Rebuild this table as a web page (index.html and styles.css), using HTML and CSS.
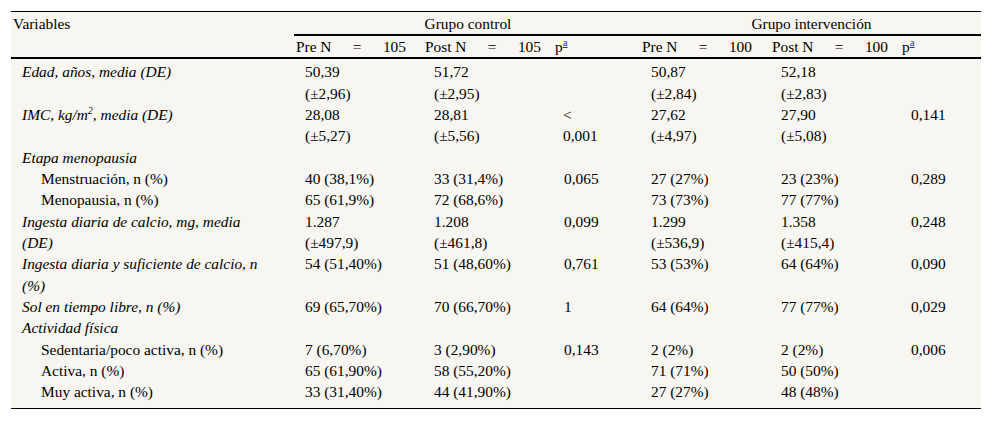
FILE: index.html
```html
<!DOCTYPE html>
<html lang="es">
<head>
<meta charset="utf-8">
<title>Tabla</title>
<link rel="stylesheet" href="styles.css">
</head>
<body>
<div class="page">
<table class="tbl">
  <colgroup>
    <col class="c-var">
    <col class="c-pre">
    <col class="c-post">
    <col class="c-p">
    <col class="c-pre2">
    <col class="c-post2">
    <col class="c-p2">
  </colgroup>
  <thead>
    <tr class="h1">
      <th class="hv" rowspan="2">Variables</th>
      <th class="hg" colspan="3">Grupo control</th>
      <th class="hg" colspan="3">Grupo intervención</th>
    </tr>
    <tr class="h2">
      <th><span class="nj w1"><span>Pre N</span><span>=</span><span>105</span></span></th>
      <th><span class="nj w2"><span>Post N</span><span>=</span><span>105</span></span></th>
      <th>p<sup><a href="#" class="fn">a</a></sup></th>
      <th><span class="nj w1"><span>Pre N</span><span>=</span><span>100</span></span></th>
      <th><span class="nj w2"><span>Post N</span><span>=</span><span>100</span></span></th>
      <th>p<sup><a href="#" class="fn">a</a></sup></th>
    </tr>
  </thead>
  <tbody>
    <tr class="first">
      <td class="it">Edad, años, media (DE)</td>
      <td>50,39<br>(±2,96)</td>
      <td>51,72<br>(±2,95)</td>
      <td></td>
      <td>50,87<br>(±2,84)</td>
      <td>52,18<br>(±2,83)</td>
      <td></td>
    </tr>
    <tr>
      <td class="it">IMC, kg/m<sup class="sq">2</sup>, media (DE)</td>
      <td>28,08<br>(±5,27)</td>
      <td>28,81<br>(±5,56)</td>
      <td class="lt">&lt;<br>0,001</td>
      <td>27,62<br>(±4,97)</td>
      <td>27,90<br>(±5,08)</td>
      <td>0,141</td>
    </tr>
    <tr>
      <td class="it">Etapa menopausia</td>
      <td></td><td></td><td></td><td></td><td></td><td></td>
    </tr>
    <tr>
      <td class="sub">Menstruación, n (%)</td>
      <td>40 (38,1%)</td>
      <td>33 (31,4%)</td>
      <td>0,065</td>
      <td>27 (27%)</td>
      <td>23 (23%)</td>
      <td>0,289</td>
    </tr>
    <tr>
      <td class="sub">Menopausia, n (%)</td>
      <td>65 (61,9%)</td>
      <td>72 (68,6%)</td>
      <td></td>
      <td>73 (73%)</td>
      <td>77 (77%)</td>
      <td></td>
    </tr>
    <tr>
      <td class="it">Ingesta diaria de calcio, mg, media<br>(DE)</td>
      <td>1.287<br>(±497,9)</td>
      <td>1.208<br>(±461,8)</td>
      <td>0,099</td>
      <td>1.299<br>(±536,9)</td>
      <td>1.358<br>(±415,4)</td>
      <td>0,248</td>
    </tr>
    <tr>
      <td class="it">Ingesta diaria y suficiente de calcio, n<br>(%)</td>
      <td>54 (51,40%)</td>
      <td>51 (48,60%)</td>
      <td>0,761</td>
      <td>53 (53%)</td>
      <td>64 (64%)</td>
      <td>0,090</td>
    </tr>
    <tr>
      <td class="it">Sol en tiempo libre, n (%)</td>
      <td>69 (65,70%)</td>
      <td>70 (66,70%)</td>
      <td>1</td>
      <td>64 (64%)</td>
      <td>77 (77%)</td>
      <td>0,029</td>
    </tr>
    <tr>
      <td class="it">Actividad física</td>
      <td></td><td></td><td></td><td></td><td></td><td></td>
    </tr>
    <tr>
      <td class="sub">Sedentaria/poco activa, n (%)</td>
      <td>7 (6,70%)</td>
      <td>3 (2,90%)</td>
      <td>0,143</td>
      <td>2 (2%)</td>
      <td>2 (2%)</td>
      <td>0,006</td>
    </tr>
    <tr>
      <td class="sub">Activa, n (%)</td>
      <td>65 (61,90%)</td>
      <td>58 (55,20%)</td>
      <td></td>
      <td>71 (71%)</td>
      <td>50 (50%)</td>
      <td></td>
    </tr>
    <tr class="last">
      <td class="sub">Muy activa, n (%)</td>
      <td>33 (31,40%)</td>
      <td>44 (41,90%)</td>
      <td></td>
      <td>27 (27%)</td>
      <td>48 (48%)</td>
      <td></td>
    </tr>
  </tbody>
</table>
</div>
</body>
</html>
```

FILE: styles.css
```css
html, body {
  margin: 0;
  padding: 0;
  background: #ffffff;
}

.page {
  padding: 11px 11px 0 11px;
}

.tbl {
  width: 970px;
  table-layout: fixed;
  border-collapse: separate;
  border-spacing: 0;
  background: #f8f6f1;
  font-family: "Liberation Serif", "Times New Roman", serif;
  font-size: 15.4px;
  color: #000;
  border-top: 1px solid #000;
  border-bottom: 1px solid #000;
}

.c-var { width: 283px; }
.c-pre { width: 129px; }
.c-post { width: 130px; }
.c-p { width: 87px; }
.c-pre2 { width: 130px; }
.c-post2 { width: 130px; }
.c-p2 { width: 81px; }

.tbl th {
  font-weight: normal;
  text-align: left;
  vertical-align: top;
  padding: 0 0 0 2px;
  line-height: 21.33px;
  white-space: nowrap;
}

.h1 th {
  height: 22px;
  padding-top: 1px;
  line-height: 21px;
  box-sizing: border-box;
}

.h1 .hg {
  text-align: center;
  border-bottom: 2px solid #000;
}

.h1 .hv {
  border-bottom: 2px solid #000;
}

.h2 th {
  border-bottom: 2px solid #000;
}

.nj {
  display: inline-flex;
  justify-content: space-between;
}

.w1 { width: 110px; }
.w2 { width: 116px; }

.fn {
  color: #2b2bf0;
  text-decoration: underline;
}

sup {
  font-size: 11px;
  line-height: 0;
  vertical-align: 6px;
}

.sq {
  font-size: 10px;
  vertical-align: 6px;
}

.tbl td {
  vertical-align: top;
  padding: 0 0 0 11px;
  line-height: 21.33px;
  white-space: nowrap;
}

.tbl td.lt {
  padding-left: 10px;
}

.tbl td.it {
  font-style: italic;
}

.tbl td.sub {
  padding-left: 30px;
}

.first td {
  padding-top: 2px;
}

.last td {
  padding-bottom: 5px;
}
```
